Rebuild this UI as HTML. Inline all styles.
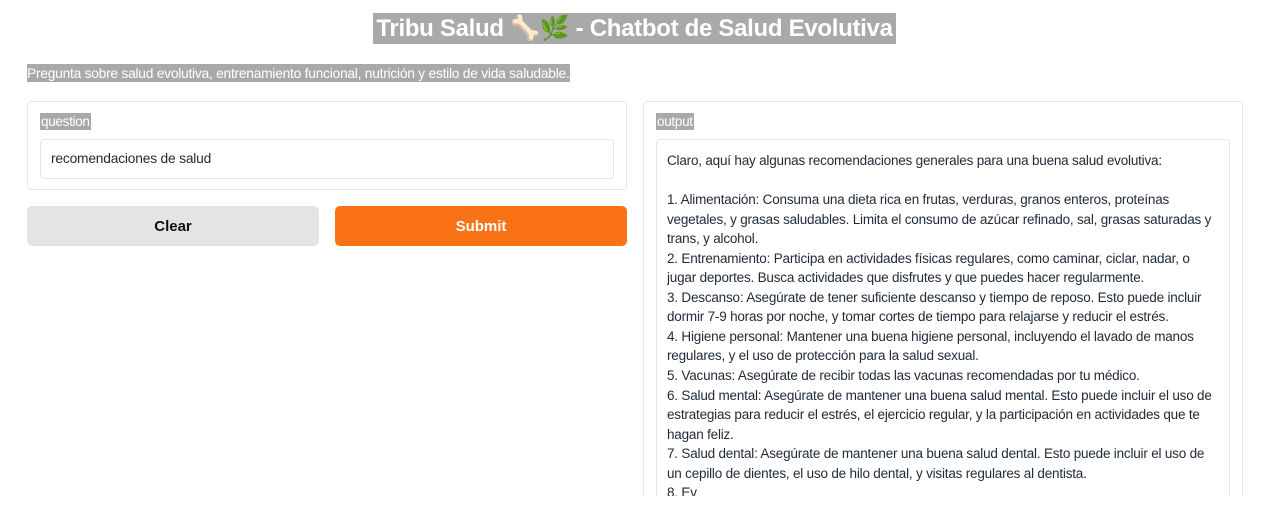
<!DOCTYPE html>
<html><head><meta charset="utf-8"><style>
html,body{margin:0;width:1266px;height:518px;overflow:hidden}
body{background:#fff;font-family:"Liberation Sans",sans-serif;position:relative;color:#1f2937}
.abs{position:absolute}
.title{left:373px;top:13px;width:523px;height:31px;background:#a9a9a9;color:#fff;font-weight:bold;font-size:24px;line-height:32px;text-align:center;white-space:nowrap;letter-spacing:-0.3px;overflow:hidden}
.sub{left:27px;top:64px;width:543px;height:18px;background:#a9a9a9;color:#fff;font-size:13.8px;line-height:19px;white-space:nowrap;letter-spacing:-0.25px;overflow:hidden}
.panel{border:1px solid #e5e7eb;border-radius:4px;box-sizing:border-box;background:#fff}
.lab{background:#a9a9a9;color:#fff;font-size:13.5px;line-height:17px;height:17px;padding:0 1px;letter-spacing:-0.3px}
.box{border:1px solid #e5e7eb;border-radius:4px;box-sizing:border-box;background:#fff}
.btn{border-radius:5px;font-weight:bold;font-size:15px;text-align:center;line-height:42px;height:40px}
.out div{height:19.55px;line-height:19.55px;white-space:nowrap;font-size:13.5px;letter-spacing:-0.2px;color:#1f2937}
</style></head><body>
<div class="abs title">Tribu Salud 🦴🌿 - Chatbot de Salud Evolutiva</div>
<div class="abs sub">Pregunta sobre salud evolutiva, entrenamiento funcional, nutrición y estilo de vida saludable.</div>

<div class="abs panel" style="left:27px;top:101px;width:600px;height:89px"></div>
<div class="abs lab" style="left:40px;top:113px">question</div>
<div class="abs box" style="left:40px;top:139px;width:574px;height:40px;font-size:13.8px;line-height:38px;padding-left:10px;letter-spacing:-0.2px">recomendaciones de salud</div>

<div class="abs btn" style="left:27px;top:206px;width:292px;background:#e4e4e7;color:#111">Clear</div>
<div class="abs btn" style="left:335px;top:206px;width:292px;background:#f97316;color:#fff">Submit</div>

<div class="abs" style="left:643px;top:101px;width:600px;height:395px;overflow:hidden">
  <div class="abs panel" style="left:0;top:0;width:600px;height:440px"></div>
  <div class="abs lab" style="left:13px;top:12px">output</div>
  <div class="abs box" style="left:13px;top:38px;width:574px;height:400px"></div>
  <div class="abs out" style="left:24px;top:50px;width:560px;height:345px;overflow:hidden">
<div>Claro, aquí hay algunas recomendaciones generales para una buena salud evolutiva:</div>
<div></div>
<div>1. Alimentación: Consuma una dieta rica en frutas, verduras, granos enteros, proteínas</div>
<div>vegetales, y grasas saludables. Limita el consumo de azúcar refinado, sal, grasas saturadas y</div>
<div>trans, y alcohol.</div>
<div>2. Entrenamiento: Participa en actividades físicas regulares, como caminar, ciclar, nadar, o</div>
<div>jugar deportes. Busca actividades que disfrutes y que puedes hacer regularmente.</div>
<div>3. Descanso: Asegúrate de tener suficiente descanso y tiempo de reposo. Esto puede incluir</div>
<div>dormir 7-9 horas por noche, y tomar cortes de tiempo para relajarse y reducir el estrés.</div>
<div>4. Higiene personal: Mantener una buena higiene personal, incluyendo el lavado de manos</div>
<div>regulares, y el uso de protección para la salud sexual.</div>
<div>5. Vacunas: Asegúrate de recibir todas las vacunas recomendadas por tu médico.</div>
<div>6. Salud mental: Asegúrate de mantener una buena salud mental. Esto puede incluir el uso de</div>
<div>estrategias para reducir el estrés, el ejercicio regular, y la participación en actividades que te</div>
<div>hagan feliz.</div>
<div>7. Salud dental: Asegúrate de mantener una buena salud dental. Esto puede incluir el uso de</div>
<div>un cepillo de dientes, el uso de hilo dental, y visitas regulares al dentista.</div>
<div>8. Ev</div>
  </div>
</div>
</body></html>
